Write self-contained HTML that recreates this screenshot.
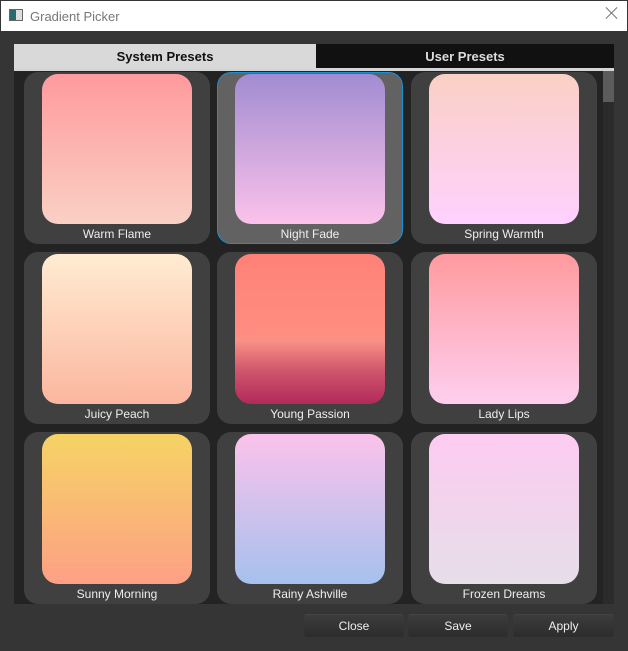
<!DOCTYPE html><html><head><style>
*{margin:0;padding:0;box-sizing:border-box}
body{width:628px;height:651px;background:#353535;font-family:"Liberation Sans",sans-serif;position:relative;overflow:hidden}
.title{position:absolute;left:1px;top:1px;width:626px;height:30px;background:#fff;}
.title span{position:absolute;left:29px;top:8px;font-size:13px;color:#777}
.ico{position:absolute;left:8px;top:8px;width:14px;height:12px;border:1px solid #666;background:linear-gradient(90deg,#2a6a6a 0 50%,#ddd 50%)}
.x{position:absolute;right:9px;top:6px;width:12px;height:12px}
.x:before,.x:after{content:"";position:absolute;left:5px;top:-2px;width:1px;height:16px;background:#777;transform:rotate(45deg)}
.x:after{transform:rotate(-45deg)}
.tab{position:absolute;top:44px;height:24px;font-size:13px;font-weight:bold;text-align:center;line-height:26px}
.content{position:absolute;left:14px;top:71px;width:600px;height:533px;background:#232323;overflow:hidden}
.line{position:absolute;left:14px;top:68px;width:600px;height:3px;background:#d6d6d6}
.sb{position:absolute;left:603px;top:71px;width:11px;height:533px;background:#2b2b2b}
.thumb{position:absolute;left:603px;top:71px;width:11px;height:31px;background:#5c5c5c}
.card{position:absolute;width:186px;height:172px;background:#404040;border-radius:14px}
.card.sel{background:#626262;border:1px solid #1b8fd0}
.sw{position:absolute;left:18px;top:2px;width:150px;height:150px;border-radius:16px}
.sel .sw{left:17px;top:1px}
.lb{position:absolute;left:0;width:100%;top:155px;text-align:center;font-size:12px;color:#eee}
.sel .lb{top:154px}
.btn{position:absolute;top:614px;height:23px;width:100px;border-radius:3px;background:linear-gradient(#3c3c3c,#2c2c2c);border-top:1px solid #444;color:#eee;font-size:12px;text-align:center;line-height:23px}
</style></head><body>
<div class="title"><div class="ico"></div><span>Gradient Picker</span><div class="x"></div></div>
<div class="tab" style="left:14px;width:302px;background:#d9d9d9;color:#111">System Presets</div>
<div class="tab" style="left:316px;width:298px;background:#111;color:#ddd">User Presets</div>
<div class="line"></div>
<div class="content"></div>
<div class="sb"></div><div class="thumb"></div>

<div class="card" style="left:24px;top:72px"><div class="sw" style="background:linear-gradient(#ff9a9e,#fad0c4)"></div><div class="lb">Warm Flame</div></div>
<div class="card sel" style="left:217px;top:72px"><div class="sw" style="background:linear-gradient(#a18cd1,#fbc2eb)"></div><div class="lb">Night Fade</div></div>
<div class="card" style="left:411px;top:72px"><div class="sw" style="background:linear-gradient(#fad0c4,#ffd1ff)"></div><div class="lb">Spring Warmth</div></div>

<div class="card" style="left:24px;top:252px"><div class="sw" style="background:linear-gradient(#ffecd2,#fcb69f)"></div><div class="lb">Juicy Peach</div></div>
<div class="card" style="left:217px;top:252px"><div class="sw" style="background:linear-gradient(#ff8177 0%,#ff867a 21%,#ff8c7f 52%,#f99185 58%,#cf556c 78%,#b12a5b 100%)"></div><div class="lb">Young Passion</div></div>
<div class="card" style="left:411px;top:252px"><div class="sw" style="background:linear-gradient(#ff9a9e,#fecfef)"></div><div class="lb">Lady Lips</div></div>

<div class="card" style="left:24px;top:432px"><div class="sw" style="background:linear-gradient(#f6d365,#fda085)"></div><div class="lb">Sunny Morning</div></div>
<div class="card" style="left:217px;top:432px"><div class="sw" style="background:linear-gradient(#fbc2eb,#a6c1ee)"></div><div class="lb">Rainy Ashville</div></div>
<div class="card" style="left:411px;top:432px"><div class="sw" style="background:linear-gradient(#fdcbf1,#e6dee9)"></div><div class="lb">Frozen Dreams</div></div>

<div class="btn" style="left:304px">Close</div>
<div class="btn" style="left:408px">Save</div>
<div class="btn" style="left:513px;width:101px">Apply</div>
</body></html>
